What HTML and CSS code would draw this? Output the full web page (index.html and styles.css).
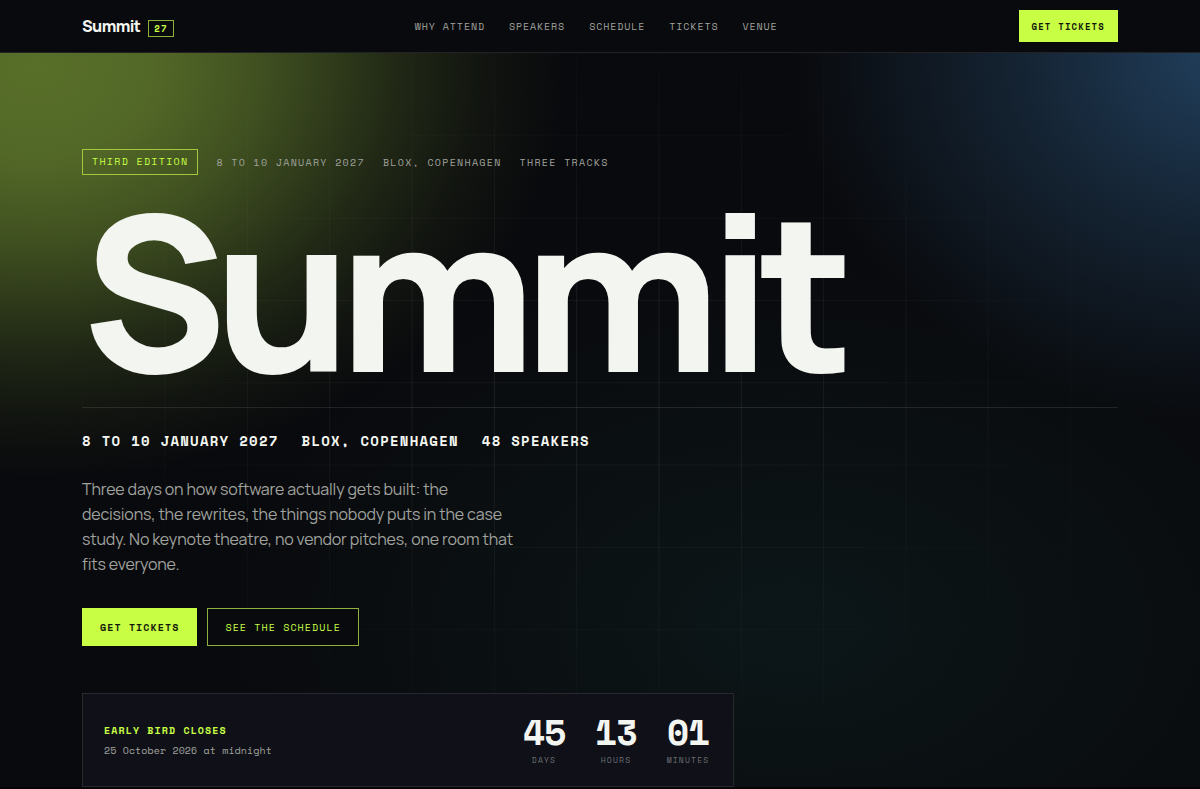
FILE: index.html
```
<!DOCTYPE html>
<html lang="en">
  <head>
    <meta charset="UTF-8" />
    <meta name="viewport" content="width=device-width, initial-scale=1.0" />
    <title>Summit 27</title>
    <link rel="stylesheet" href="styles.css">
  </head>
  <body>
    <header class="site-header">
      <div class="container header-inner">
        <a href="#top" class="logo">Summit <span class="logo-badge">27</span></a>
        <nav class="nav">
          <a href="#why">Why attend</a>
          <a href="#speakers">Speakers</a>
          <a href="#schedule">Schedule</a>
          <a href="#tickets">Tickets</a>
          <a href="#venue">Venue</a>
        </nav>
        <button type="button" class="btn btn-primary btn-small">Get tickets</button>
      </div>
    </header>

    <main class="hero" id="top">
      <div class="container hero-inner">
        <div class="eyebrow">
          <span class="pill">Third edition</span>
          <span>8 to 10 January 2027</span>
          <span>BLOX, Copenhagen</span>
          <span>Three tracks</span>
        </div>

        <h1>Summit</h1>

        <div class="facts">
          <span>8 to 10 January 2027</span>
          <span>BLOX, Copenhagen</span>
          <span>48 speakers</span>
        </div>

        <p class="lead">
          Three days on how software actually gets built: the decisions, the
          rewrites, the things nobody puts in the case study. No keynote
          theatre, no vendor pitches, one room that fits everyone.
        </p>

        <div class="actions">
          <button type="button" class="btn btn-primary">Get tickets</button>
          <button type="button" class="btn btn-outline">See the schedule</button>
        </div>

        <section class="countdown">
          <div>
            <h2>Early bird closes</h2>
            <p class="deadline">25 October 2026 at midnight</p>
          </div>
          <div class="units">
            <div class="unit"><strong>45</strong><span>Days</span></div>
            <div class="unit"><strong>13</strong><span>Hours</span></div>
            <div class="unit"><strong>01</strong><span>Minutes</span></div>
          </div>
        </section>
      </div>
    </main>
  </body>
</html>
```

FILE: styles.css
```
:root {
  --bg: #090a0d;
  --text: #f3f5f0;
  --muted: #a0a29e;
  --dim: #6c7074;
  --lime: #c8ff45;
  --line: rgba(255, 255, 255, 0.1);
  --mono: "Space Mono", "DejaVu Sans Mono", monospace;
  --sans: Manrope, Inter, sans-serif;
}

* {
  box-sizing: border-box;
  margin: 0;
  padding: 0;
}

body {
  font-family: var(--sans);
  background: #050507;
  color: var(--text);
}

a {
  color: inherit;
  text-decoration: none;
}

.container {
  width: 100%;
  max-width: 1200px;
  margin: 0 auto;
  padding: 0 82px;
}

/* header */
.site-header {
  background: var(--bg);
  border-bottom: 1px solid var(--line);
}

.header-inner {
  display: flex;
  justify-content: space-between;
  align-items: center;
  height: 52px;
}

.logo {
  display: flex;
  align-items: center;
  gap: 8px;
  font-size: 16px;
  font-weight: 800;
  letter-spacing: -0.04em;
}

.logo-badge {
  margin-top: 4px;
  padding: 0 5px;
  border: 1px solid #8fb13b;
  color: var(--lime);
  font-family: var(--mono);
  font-size: 9px;
  line-height: 15px;
  letter-spacing: 0.14em;
}

.nav {
  display: flex;
  gap: 24px;
  color: var(--muted);
  font-family: var(--mono);
  font-size: 10px;
  letter-spacing: 0.09em;
  text-transform: uppercase;
}

/* buttons */
.btn {
  padding: 0 17px;
  border: 1px solid var(--lime);
  height: 38px;
  font-family: var(--mono);
  font-size: 10px;
  letter-spacing: 0.11em;
  text-transform: uppercase;
  cursor: pointer;
}

.btn-primary {
  background: var(--lime);
  color: #12180a;
  font-weight: 700;
}

.btn-outline {
  background: var(--bg);
  border-color: #8fb13b;
  color: var(--lime);
}

.btn-small {
  height: 32px;
  padding: 0 12px;
  font-size: 9px;
  letter-spacing: 0.13em;
}

/* hero */
.hero {
  position: relative;
  background:
    radial-gradient(ellipse 44% 56% at 3% 2%, #586f29 0%, rgba(88, 111, 41, 0.93) 22%, rgba(88, 111, 41, 0.7) 42%, rgba(88, 111, 41, 0.3) 68%, rgba(88, 111, 41, 0.1) 85%, rgba(88, 111, 41, 0) 100%),
    radial-gradient(ellipse 36% 50% at 102% 0%, #213f5c 0%, rgba(33, 63, 92, 0.45) 50%, rgba(33, 63, 92, 0) 100%),
    radial-gradient(ellipse 48% 50% at 66% 78%, #0c1618 0%, rgba(12, 22, 24, 0) 100%),
    var(--bg);
}

/* faint grid, fading out from the middle */
.hero::before {
  content: "";
  position: absolute;
  inset: 0;
  background-image:
    linear-gradient(rgba(255, 255, 255, 0.05) 1px, transparent 1px),
    linear-gradient(90deg, rgba(255, 255, 255, 0.07) 1px, transparent 1px);
  background-size: 6.86vw 6.86vw;
  mask-image: radial-gradient(ellipse 50% 55% at 50% 45%, #000 20%, transparent 100%);
}

.hero-inner {
  position: relative;
  padding-top: 96px;
}

.eyebrow {
  display: flex;
  flex-wrap: wrap;
  align-items: center;
  gap: 18px;
  color: var(--muted);
  font-family: var(--mono);
  font-size: 10px;
  letter-spacing: 0.13em;
  text-transform: uppercase;
}

.pill {
  padding: 0 9px;
  border: 1px solid #a1c83e;
  color: var(--lime);
  line-height: 24px;
}

h1 {
  margin-top: 27px;
  padding-bottom: 29px;
  border-bottom: 1px solid var(--line);
  font-size: 216px;
  font-weight: 800;
  line-height: 176px;
  letter-spacing: -0.06em;
}

.facts {
  display: flex;
  flex-wrap: wrap;
  gap: 23px;
  padding-top: 23px;
  font-family: var(--mono);
  font-size: 14px;
  font-weight: 700;
  line-height: 20px;
  letter-spacing: 0.09em;
  text-transform: uppercase;
}

.lead {
  max-width: 436px;
  margin-top: 26px;
  color: var(--muted);
  font-size: 16px;
  line-height: 25px;
  letter-spacing: -0.01em;
}

.actions {
  display: flex;
  gap: 10px;
  margin-top: 31px;
}

.countdown {
  display: flex;
  justify-content: space-between;
  align-items: center;
  max-width: 652px;
  margin-top: 47px;
  padding: 21px 20px 20px 21px;
  border: 1px solid var(--line);
  background: #101118;
  font-family: var(--mono);
}

.countdown h2 {
  color: var(--lime);
  font-size: 10px;
  line-height: 20px;
  letter-spacing: 0.11em;
  text-transform: uppercase;
}

.deadline {
  color: var(--muted);
  font-size: 10px;
  line-height: 20px;
  letter-spacing: 0.01em;
}

.units {
  display: flex;
  gap: 22px;
}

.unit {
  display: flex;
  flex-direction: column;
  align-items: center;
  min-width: 50px;
}

.unit strong {
  font-size: 36px;
  line-height: 34px;
  letter-spacing: -0.03em;
}

.unit span {
  margin-top: 5px;
  color: var(--dim);
  font-size: 8px;
  line-height: 12px;
  letter-spacing: 0.15em;
  text-transform: uppercase;
}
```
